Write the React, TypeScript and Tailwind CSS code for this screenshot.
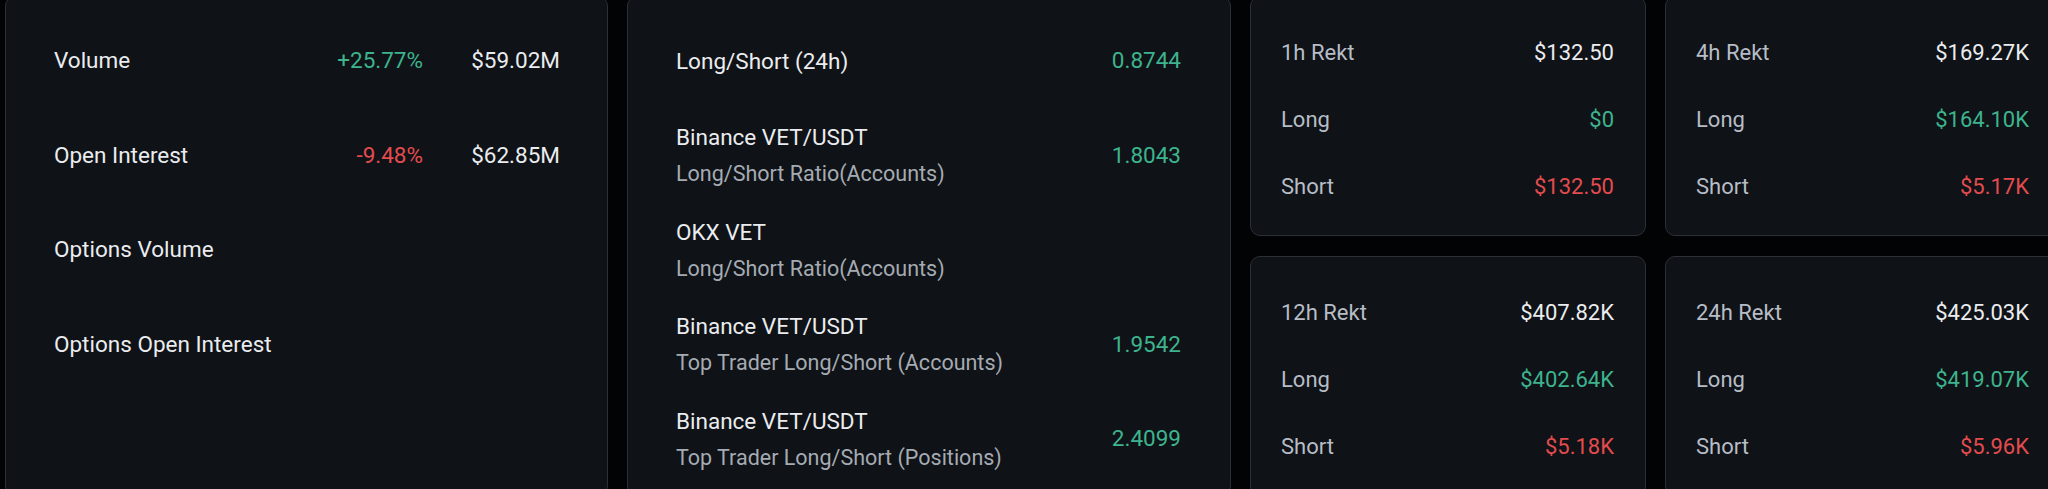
import React from 'react';

type RatioRow = {
  title: string;
  sub?: string;
  value?: string;
};

type RektCard = {
  label: string;
  total: string;
  long: string;
  short: string;
};

const marketRows = [
  { label: 'Volume', change: '+25.77%', up: true, value: '$59.02M' },
  { label: 'Open Interest', change: '-9.48%', up: false, value: '$62.85M' },
  { label: 'Options Volume' },
  { label: 'Options Open Interest' },
];

const ratioRows: RatioRow[] = [
  { title: 'Long/Short (24h)', value: '0.8744' },
  { title: 'Binance VET/USDT', sub: 'Long/Short Ratio(Accounts)', value: '1.8043' },
  { title: 'OKX VET', sub: 'Long/Short Ratio(Accounts)' },
  { title: 'Binance VET/USDT', sub: 'Top Trader Long/Short (Accounts)', value: '1.9542' },
  { title: 'Binance VET/USDT', sub: 'Top Trader Long/Short (Positions)', value: '2.4099' },
];

const rekt: RektCard[][] = [
  [
    { label: '1h Rekt', total: '$132.50', long: '$0', short: '$132.50' },
    { label: '12h Rekt', total: '$407.82K', long: '$402.64K', short: '$5.18K' },
  ],
  [
    { label: '4h Rekt', total: '$169.27K', long: '$164.10K', short: '$5.17K' },
    { label: '24h Rekt', total: '$425.03K', long: '$419.07K', short: '$5.96K' },
  ],
];

function Card({ item }: { item: RektCard }) {
  return (
    <div className="flex h-[240px] flex-col gap-[39px] rounded-[10px] border border-[#2b2f36] bg-[#0f1216] pt-[42px] pb-[34px] pl-[30px] pr-[31px] text-[22px] leading-[28px]">
      <div className="flex items-center justify-between">
        <span className="text-[#b7bdc6]">{item.label}</span>
        <span className="text-[#eaecef]">{item.total}</span>
      </div>
      <div className="flex items-center justify-between">
        <span className="text-[#b7bdc6]">Long</span>
        <span className="text-[#3db48e]">{item.long}</span>
      </div>
      <div className="flex items-center justify-between">
        <span className="text-[#b7bdc6]">Short</span>
        <span className="text-[#e34c4f]">{item.short}</span>
      </div>
    </div>
  );
}

export default function App() {
  return (
    <div
      className="h-[489px] w-[2048px] overflow-hidden bg-[#020304]"
      style={{ fontFamily: 'Roboto, "Noto Sans", sans-serif' }}
    >
      <div className="-mt-1 flex gap-[19px] pl-[5px]">
        {/* market stats */}
        <div className="w-[603px] shrink-0 rounded-[10px] border border-[#2b2f36] bg-[#0f1216] pl-[48px] pr-[47px] pt-[17px]">
          {marketRows.map((r) => (
            <div key={r.label} className="flex h-[94.5px] items-center text-[22.5px] text-[#eaecef]">
              <span className="flex-1">{r.label}</span>
              {r.change && (
                <span className={r.up ? 'text-[#3db48e]' : 'text-[#e34c4f]'}>{r.change}</span>
              )}
              {r.value && <span className="w-[137px] text-right">{r.value}</span>}
            </div>
          ))}
        </div>

        {/* long/short ratios */}
        <div className="w-[604px] shrink-0 rounded-[10px] border border-[#2b2f36] bg-[#0f1216] pl-[48px] pr-[49px] pt-[17px]">
          {ratioRows.map((r, i) => (
            <div key={i} className="flex h-[94.5px] items-center justify-between">
              <div className="flex flex-col gap-[9px]">
                <span className="text-[22.5px] leading-[28px] text-[#eaecef]">{r.title}</span>
                {r.sub && <span className="text-[21.5px] leading-[28px] text-[#a5abb3]">{r.sub}</span>}
              </div>
              {r.value && <span className="text-[22.5px] text-[#3db48e]">{r.value}</span>}
            </div>
          ))}
        </div>

        {/* rekt cards */}
        {rekt.map((col, i) => (
          <div key={i} className="flex w-[396px] shrink-0 flex-col gap-5">
            {col.map((c) => (
              <Card key={c.label} item={c} />
            ))}
          </div>
        ))}
      </div>
    </div>
  );
}
